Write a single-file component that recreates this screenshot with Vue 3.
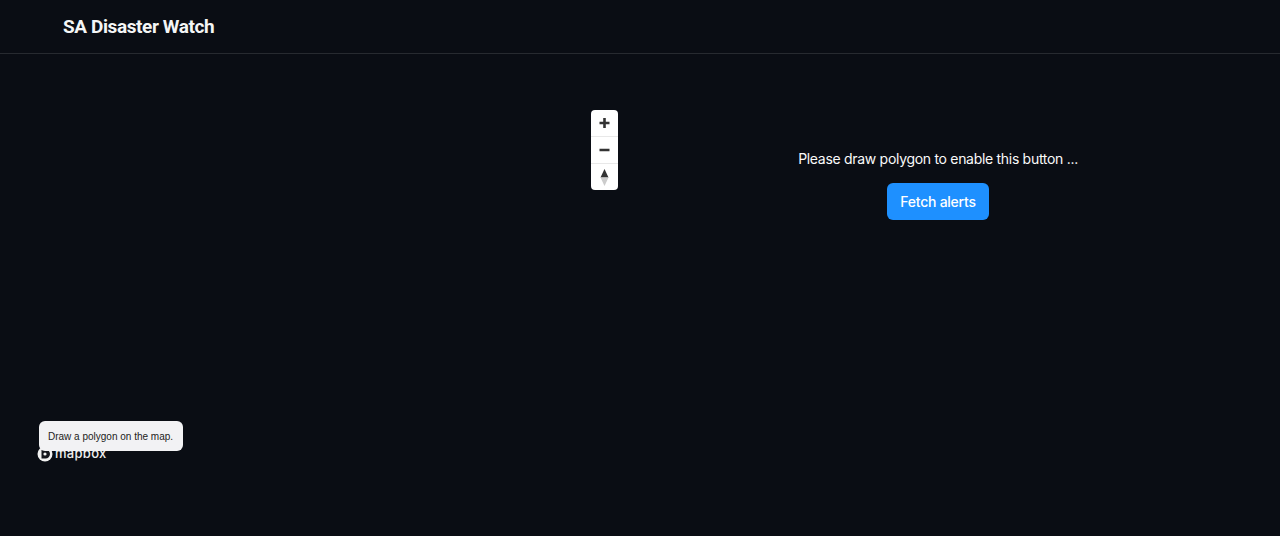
<template>
  <div class="page">
    <header class="header">
      <div class="title">SA Disaster Watch</div>
    </header>
    <main class="content">
      <div class="map_wrapper">
        <div class="map_controls">
          <button class="ctrl_btn" aria-label="Zoom in">
            <svg width="27" height="26" viewBox="0 0 27 26">
              <path d="M13.5 8v10M8.5 13h10" stroke="#333" stroke-width="2.6" fill="none" />
            </svg>
          </button>
          <button class="ctrl_btn" aria-label="Zoom out">
            <svg width="27" height="26" viewBox="0 0 27 26">
              <path d="M8.5 13h10" stroke="#333" stroke-width="2.6" fill="none" />
            </svg>
          </button>
          <button class="ctrl_btn" aria-label="Reset north">
            <svg width="27" height="26" viewBox="0 0 27 26">
              <path d="M13.5 5l4 8.5h-8z" fill="#333" />
              <path d="M13.5 22l4-8.5h-8z" fill="#ccc" />
            </svg>
          </button>
        </div>
        <div class="mapbox_logo">
          <svg width="16" height="16" viewBox="0 0 16 16">
            <circle cx="8" cy="8" r="7.5" fill="#f2f2f2" />
            <path d="M4.5 3.5h4a4.5 4.5 0 0 1 0 9h-4z" fill="#14161c" />
            <circle cx="8" cy="8" r="1.6" fill="#f2f2f2" />
          </svg>
          <span class="logo_text">mapbox</span>
        </div>
        <div class="tooltip">Draw a polygon on the map.</div>
      </div>
      <section class="panel">
        <p class="hint">Please draw polygon to enable this button ...</p>
        <button class="fetch_btn">Fetch alerts</button>
      </section>
    </main>
  </div>
</template>

<script setup>
</script>

<style>
body {
  background: #0a0d14;
}
</style>

<style scoped>
.page {
  height: 536px;
  overflow: hidden;
  background: #0a0d14;
  font-family: Inter, "Liberation Sans", sans-serif;
}
.header {
  height: 53px;
  box-sizing: content-box;
  border-bottom: 1px solid #272a30;
  display: flex;
  align-items: center;
  padding-left: 63px;
}
.title {
  font-family: Roboto, "Liberation Sans", sans-serif;
  font-weight: 700;
  font-size: 19px;
  color: #f4f5f6;
  letter-spacing: -0.4px;
}
.content {
  display: flex;
  padding: 46px 32px 0;
}
.map_wrapper {
  width: 596px;
  height: 370px;
  flex: none;
  position: relative;
}
.map_controls {
  position: absolute;
  top: 10px;
  right: 10px;
  width: 27px;
  background: #fff;
  border-radius: 4px;
  display: flex;
  flex-direction: column;
  overflow: hidden;
}
.ctrl_btn {
  width: 27px;
  height: 27px;
  padding: 0;
  border: 0;
  background: none;
  display: flex;
  align-items: center;
  justify-content: center;
}
.ctrl_btn:first-child {
  height: 26px;
}
.ctrl_btn + .ctrl_btn {
  border-top: 1px solid #e8e8e8;
}
.mapbox_logo {
  position: absolute;
  left: 5px;
  bottom: 8px;
  display: flex;
  align-items: center;
  gap: 2px;
  color: #f0f0f0;
}
.logo_text {
  font-family: Inter, "Liberation Sans", sans-serif;
  font-size: 13px;
  font-weight: 500;
  letter-spacing: 0.3px;
  position: relative;
  top: -1px;
}
.tooltip {
  position: absolute;
  left: 7px;
  top: 321px;
  height: 30px;
  padding: 0 10px 0 9px;
  display: flex;
  align-items: center;
  background: #f2f2f4;
  border-radius: 6px;
  font-family: "Liberation Sans", Arial, sans-serif;
  font-size: 10px;
  color: #222;
}
.panel {
  width: 620px;
  flex: none;
  display: flex;
  flex-direction: column;
  align-items: center;
  padding-top: 50px;
}
.hint {
  margin: 0;
  font-size: 14px;
  font-weight: 400;
  line-height: 17px;
  letter-spacing: -0.3px;
  color: #fafafa;
}
.fetch_btn {
  margin-top: 16px;
  width: 102px;
  height: 37px;
  border: 0;
  border-radius: 6px;
  background: #1e90ff;
  color: #fff;
  font-family: Inter, "Liberation Sans", sans-serif;
  font-size: 14px;
  font-weight: 500;
  letter-spacing: -0.25px;
}
</style>
